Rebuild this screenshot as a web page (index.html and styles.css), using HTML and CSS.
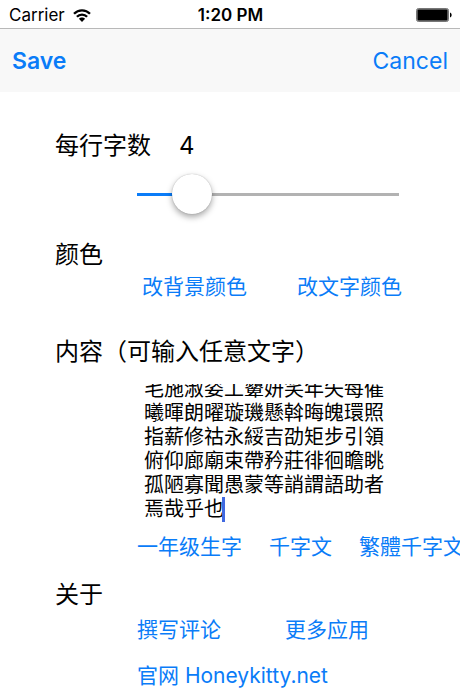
FILE: index.html
```html
<!DOCTYPE html>
<html lang="zh-Hans">
<head>
<meta charset="utf-8">
<meta name="viewport" content="width=device-width, initial-scale=1">
<title>Settings</title>
<link rel="stylesheet" href="styles.css">
</head>
<body>
<header>
  <div class="status">
    <div class="carrier">
      <span>Carrier</span>
      <svg width="18" height="13" viewBox="0 0 18 13" aria-hidden="true">
        <g fill="none" stroke="#000" stroke-width="2.300">
          <path d="M1 4.800C5.400.2 12.600.2 17 4.800"/>
          <path d="M3.900 7.800c2.800-3 7.400-3 10.200 0"/>
        </g>
        <path d="M9 13 5.900 9.800c1.700-1.800 4.500-1.800 6.200 0z"/>
      </svg>
    </div>
    <time>1:20 PM</time>
    <svg class="battery" width="36" height="14" viewBox="0 0 36 14" aria-hidden="true">
      <rect x=".5" y=".5" width="32" height="13" rx="2" fill="#aaa" stroke="#777"/>
      <rect x="1.500" y="1.500" width="30" height="11" rx="1"/>
      <path d="M34 4.500c2.200.8 2.200 4.200 0 5z"/>
    </svg>
  </div>
  <nav class="bar">
    <button class="save" type="button">Save</button>
    <button type="button">Cancel</button>
  </nav>
</header>
<main>
  <section>
    <div class="heading">
      <label for="count">每行字数</label>
      <output for="count" id="value">4</output>
    </div>
    <input class="slider" id="count" type="range" min="1" max="20" value="4">
  </section>
  <section>
    <h2 class="heading">颜色</h2>
    <div class="links colors">
      <button type="button">改背景颜色</button>
      <button type="button">改文字颜色</button>
    </div>
  </section>
  <section class="content">
    <label class="heading" for="text">内容（可输入任意文字）</label>
    <div class="editor">
      <textarea id="text" spellcheck="false">
毛施淑姿工顰妍笑年矢每催
曦暉朗曜璇璣懸斡晦魄環照
指薪修祜永綏吉劭矩步引領
俯仰廊廟束帶矜莊徘徊瞻眺
孤陋寡聞愚蒙等誚謂語助者
焉哉乎也</textarea>
      <span class="caret"></span>
    </div>
    <div class="links samples">
      <button type="button">一年级生字</button>
      <button type="button">千字文</button>
      <button type="button" lang="zh-Hant">繁體千字文</button>
    </div>
  </section>
  <section class="about">
    <h2 class="heading">关于</h2>
    <div class="links more">
      <a href="#review">撰写评论</a>
      <a href="#apps">更多应用</a>
    </div>
    <div class="links site"><a href="#site">官网 Honeykitty.net</a></div>
  </section>
</main>
<script src="script.js"></script>
</body>
</html>
```
FILE: styles.css
```css
* {
  box-sizing: border-box;
}

body {
  margin: 0;
  background: #fff;
  color: #000;
  font-family: Inter, "Noto Sans CJK SC", sans-serif;
}

button {
  padding: 0;
  border: 0;
  background: none;
  font: inherit;
  color: inherit;
  white-space: nowrap;
}

a {
  color: inherit;
  text-decoration: none;
  white-space: nowrap;
}

.status {
  display: grid;
  grid-template-columns: 1fr auto 1fr;
  align-items: center;
  height: 29px;
  padding: 2px 8px 0 9px;
  border-bottom: 1px solid #b8b8b8;
  font-size: 17px;
}

.carrier {
  display: flex;
  align-items: center;
  gap: 8px;
}

.status time {
  font-weight: 600;
}

.battery {
  justify-self: end;
}

.bar {
  display: flex;
  justify-content: space-between;
  align-items: center;
  height: 63px;
  padding: 0 12px;
  background: #f8f8f8;
  color: #0a7cf8;
  font-size: 23px;
}

.bar .save {
  font-weight: 600;
}

main {
  padding: 38px 0 0 55px;
}

.heading {
  display: flex;
  gap: 28px;
  margin: 0;
  font-size: 24px;
  font-weight: 400;
  line-height: 32px;
}

.slider {
  appearance: none;
  display: block;
  width: calc(100% - 143px);
  height: 42px;
  margin: 11px 0 24px 82px;
  background: linear-gradient(90deg, #0a7cf8 20%, #b2b2b2 20%) center / 100% 3px no-repeat;
}

.slider::-webkit-slider-thumb {
  appearance: none;
  width: 40px;
  height: 40px;
  border-radius: 50%;
  background: #fff;
  box-shadow: 0 0 1px rgba(0, 0, 0, 0.3), 0 3px 6px rgba(0, 0, 0, 0.35);
}

.links {
  display: flex;
  margin-left: 82px;
  color: #0a7cf8;
  font-size: 21px;
  line-height: 28px;
}

.colors {
  gap: 50px;
  margin-top: 2px;
  padding-left: 5px;
}

.content {
  margin-top: 35px;
}

.editor {
  position: relative;
  margin: 16px 61px 0 89px;
}

textarea {
  display: block;
  width: 100%;
  height: 138px;
  padding: 0;
  border: 0;
  outline: 0;
  resize: none;
  overflow: hidden;
  background: none;
  color: #000;
  caret-color: transparent;
  font: 20px/24px "Noto Sans CJK TC", sans-serif;
}

.caret {
  position: absolute;
  left: 78px;
  bottom: 0;
  width: 3px;
  height: 25px;
  background: #4169e1;
}

.samples {
  gap: 27px;
  margin-top: 11px;
  overflow: hidden;
}

.about {
  margin-top: 18px;
}

.more {
  gap: 64px;
  margin-top: 5px;
}

.site {
  margin-top: 18px;
}
```
FILE: script.js
```js
const text = document.getElementById('text');
text.scrollTop = text.scrollHeight;

const count = document.getElementById('count');
count.addEventListener('input', () => {
  document.getElementById('value').textContent = count.value;
});
```
